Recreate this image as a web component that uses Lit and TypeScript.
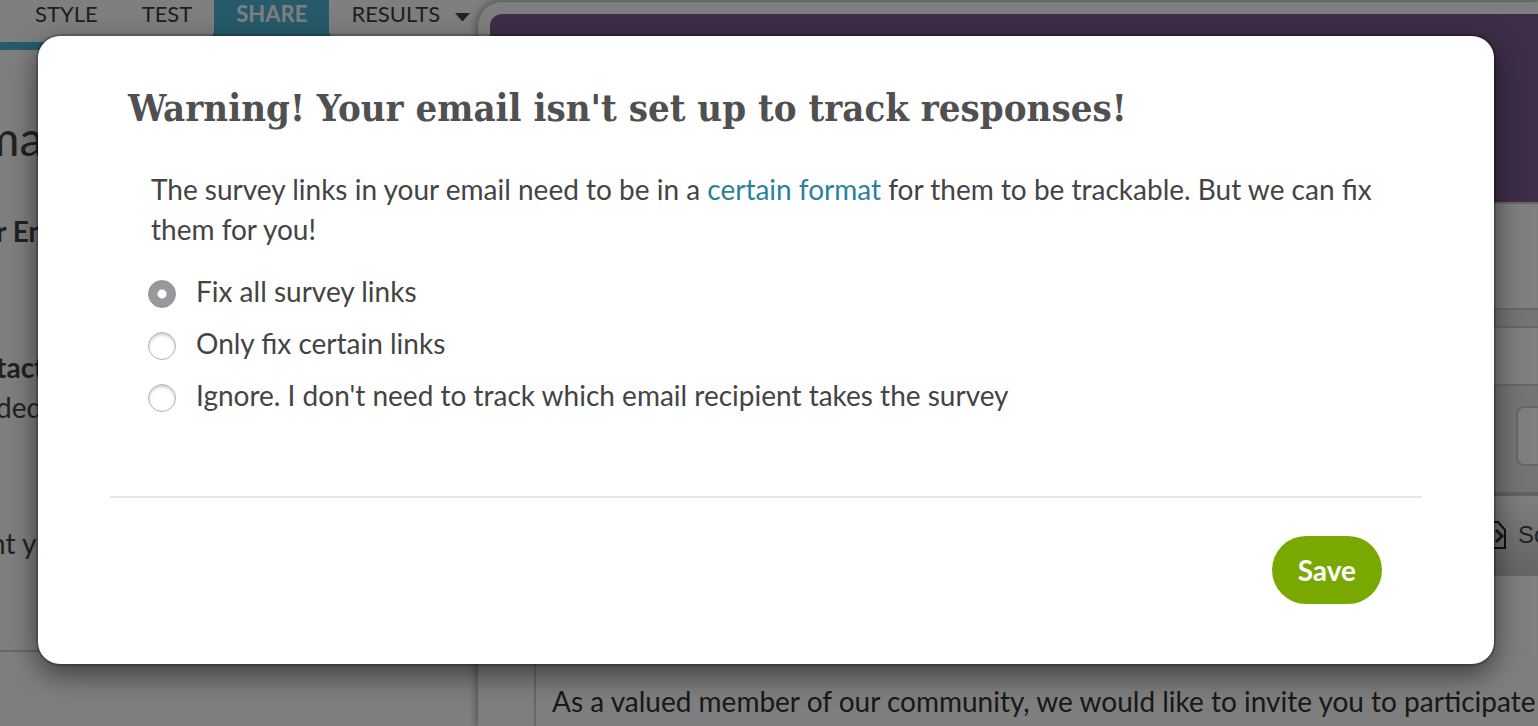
import { LitElement, html, css } from "lit";
import { customElement, state } from "lit/decorators.js";

@customElement("survey-nav")
class SurveyNav extends LitElement {
  static styles = css`
    :host { display: block; border-bottom: 8px solid #4cb6d6; }
    nav { display: flex; height: 42px; }
    a {
      display: flex;
      align-items: flex-start;
      gap: 15px;
      box-sizing: border-box;
      padding: 0 22px;
      color: #3c3c3c;
      font: 22px/28px Lato, sans-serif;
      text-decoration: none;
    }
    a.first { padding-left: 35px; }
    a.active { position: relative; background: #4cb6d6; color: #fff; font-weight: 700; }
    a.active::before, a.active::after {
      content: "";
      position: absolute;
      bottom: 0;
      width: 12px;
      height: 12px;
    }
    a.active::before { right: 100%; background: radial-gradient(circle at 0 0, transparent 12px, #4cb6d6 12px); }
    a.active::after { left: 100%; background: radial-gradient(circle at 100% 0, transparent 12px, #4cb6d6 12px); }
    svg { margin-top: 13px; }
  `;
  render() {
    return html`<nav>
      <a class="first" href="#style">STYLE</a>
      <a href="#test">TEST</a>
      <a class="active" href="#share">SHARE</a>
      <a href="#results">RESULTS
        <svg width="15" height="8" viewBox="0 0 15 8"><path d="M0 0h15L8 8H7z" fill="#444" /></svg>
      </a>
    </nav>`;
  }
}

@customElement("survey-sidebar")
class SurveySidebar extends LitElement {
  static styles = css`
    :host { display: block; overflow: hidden; color: #444; font: 28px/40px Lato, sans-serif; white-space: nowrap; }
    h1 { margin: 60px 0 0 -20px; font-size: 48px; line-height: 56px; font-weight: 400; }
    h2 { margin: 45px 0 0 -4px; font-size: 28px; line-height: 40px; font-weight: 700; }
    h2.contacts { margin-top: 96px; }
    p { margin: 0 0 0 -4px; }
    p.sent { margin: 96px 0 87px -10px; }
    hr { margin: 0; border: 0; border-top: 2px solid #cfcfcf; }
  `;
  render() {
    return html`
      <h1>ma</h1>
      <h2>r En</h2>
      <h2 class="contacts">tact</h2>
      <p>ded</p>
      <p class="sent">nt y</p>
      <hr />
    `;
  }
}

@customElement("email-preview")
class EmailPreview extends LitElement {
  static styles = css`
    :host {
      display: flex;
      flex-direction: column;
      box-sizing: border-box;
      min-width: 0;
      margin-top: 2px;
      padding: 12px 0 0 12px;
      border-radius: 24px 0 0 0;
      background: #fff;
      box-shadow: 0 0 8px 2px rgba(0, 0, 0, 0.35);
      font: 28px/40px Lato, sans-serif;
      color: #333;
    }
    .banner { height: 188px; border-radius: 12px 0 0 0; background: #7c5c90; }
    .editor {
      flex: 1;
      margin-left: 44px;
      border: solid #d0d0d0;
      border-width: 2px 0 0 2px;
      white-space: nowrap;
      overflow: hidden;
    }
    .row { display: flex; justify-content: flex-end; align-items: center; box-sizing: border-box; border-bottom: 2px solid #d0d0d0; }
    .blank { height: 106px; }
    .gap { height: 18px; background: #e8e8e8; }
    .subject { height: 58px; }
    .options { height: 110px; border-bottom: 4px solid #c4c4c4; background: #e8e8e8; }
    .options input {
      box-sizing: border-box;
      width: 60px;
      height: 60px;
      margin: -6px -38px 0 0;
      border: 2px solid #cfcfcf;
      border-radius: 8px;
      background: #fff;
    }
    .tools { height: 80px; background: linear-gradient(#fff, #c8c8c8); }
    button {
      display: flex;
      align-items: center;
      gap: 12px;
      width: 56px;
      padding: 0;
      border: 0;
      background: none;
      color: #444;
      font: 24px/28px "Liberation Sans", sans-serif;
    }
    svg { flex: none; }
    p { margin: 105px 0 0 16px; }
  `;
  render() {
    return html`
      <div class="banner"></div>
      <div class="editor">
        <div class="row blank"></div>
        <div class="row gap"></div>
        <div class="row subject"></div>
        <div class="row options"><input type="text" aria-label="Option" /></div>
        <div class="row tools">
          <button type="button">
            <svg width="24" height="28" viewBox="0 0 24 28" fill="none">
              <path d="M1 1h15l7 8v18H1z" stroke="#222" stroke-width="2" />
              <path d="M14 9l6 6-6 6" stroke="#333" stroke-width="3" />
            </svg>
            So
          </button>
        </div>
        <p>As a valued member of our community, we would like to invite you to participate</p>
      </div>
    `;
  }
}

@customElement("tracking-dialog")
class TrackingDialog extends LitElement {
  static styles = css`
    :host {
      display: block;
      box-sizing: border-box;
      padding: 48px 72px 60px;
      border-radius: 22px;
      background: #fff;
      box-shadow: 0 0 0 2px rgba(0, 0, 0, 0.2), 0 10px 30px rgba(0, 0, 0, 0.55);
      color: #444;
      font: 28px/40px Lato, sans-serif;
    }
    h2 {
      margin: 0 0 0 18px;
      color: #505050;
      font: 700 38px/48px "DejaVu Serif Condensed", "DejaVu Serif", serif;
      font-stretch: condensed;
      white-space: nowrap;
    }
    p { margin: 37px 40px 22px 41px; }
    a { color: #2b8299; text-decoration: none; }
    fieldset { display: grid; gap: 12px; margin: 0 0 81px 38px; padding: 0; border: 0; }
    label { display: flex; align-items: center; gap: 20px; }
    input {
      appearance: none;
      box-sizing: border-box;
      width: 28px;
      height: 28px;
      margin: 6px 0 0;
      border: 1px solid #b4b4b4;
      border-radius: 50%;
      background: #fff;
      box-shadow: inset 0 2px 3px rgba(0, 0, 0, 0.2);
    }
    input:checked {
      border-color: #929297;
      background: radial-gradient(circle, #fff 4px, #98989d 5px);
      box-shadow: none;
    }
    footer { display: flex; justify-content: flex-end; padding: 38px 40px 0 0; border-top: 2px solid #e5e5e5; }
    button {
      padding: 14px 26px;
      border: 0;
      border-radius: 34px;
      background: #79a800;
      color: #fff;
      font: 700 28px/40px Lato, sans-serif;
    }
  `;
  @state() choice = 0;
  options = [
    "Fix all survey links",
    "Only fix certain links",
    "Ignore. I don't need to track which email recipient takes the survey",
  ];
  render() {
    return html`
      <h2>Warning! Your email isn't set up to track responses!</h2>
      <p>The survey links in your email need to be in a <a href="#format">certain format</a> for them to be trackable. But we can fix them for you!</p>
      <fieldset>
        ${this.options.map((text, i) => html`<label>
          <input type="radio" name="fix" .checked=${i === this.choice} @change=${() => (this.choice = i)} />${text}
        </label>`)}
      </fieldset>
      <footer><button type="button">Save</button></footer>
    `;
  }
}

@customElement("app-root")
class AppRoot extends LitElement {
  static styles = css`
    :host { display: block; position: relative; height: 100vh; overflow: hidden; background: #fff; }
    .page { display: grid; grid-template-columns: 478px minmax(0, 1fr); height: 100%; }
    .backdrop {
      position: absolute;
      inset: 0;
      box-sizing: border-box;
      padding: 36px 44px 0 38px;
      background: rgba(0, 0, 0, 0.5);
    }
  `;
  render() {
    return html`
      <div class="page">
        <div>
          <survey-nav></survey-nav>
          <survey-sidebar></survey-sidebar>
        </div>
        <email-preview></email-preview>
      </div>
      <div class="backdrop"><tracking-dialog role="dialog" aria-modal="true"></tracking-dialog></div>
    `;
  }
}
